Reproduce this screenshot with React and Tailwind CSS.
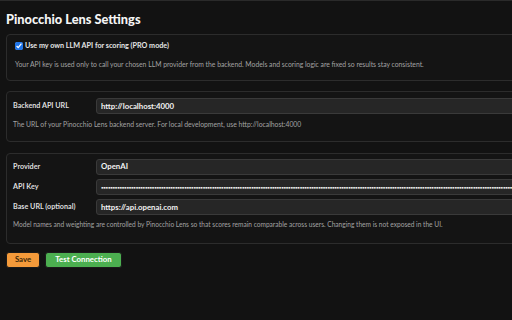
import React from 'react';

const font = { fontFamily: 'Lato, "Noto Sans", sans-serif' };

function Field({ label, children }) {
  return (
    <div className="grid grid-cols-[83px_1fr] items-center">
      <label className="text-[7.2px] font-bold text-[#dedede]">{label}</label>
      {children}
    </div>
  );
}

const boxCls =
  'h-[16px] w-full rounded-[3px] border border-[#3a3a3a] bg-[#262626] px-[4px] font-bold text-[#f2f2f2] outline-none';
const inputCls = boxCls + ' text-[7.8px]';
const passCls = boxCls + ' text-[4.5px] tracking-[-0.3px]';

export default function App() {
  return (
    <div
      className="h-[320px] w-[512px] overflow-hidden border-t border-[#2a2a2a] bg-[#121212] px-[6px] pt-[9px]"
      style={font}
    >
      <div className="w-[620px]">
        <h1 className="text-[12.8px] font-black leading-[18px] text-[#f5f5f5]">Pinocchio Lens Settings</h1>

        <section className="mt-[6px] h-[47px] rounded-[4px] border border-[#2c2c2c] bg-[#141414] px-[8px] pt-[6px]">
          <label className="flex items-center gap-[2px] text-[7.2px] font-bold text-[#e6e6e6]">
            <input type="checkbox" defaultChecked className="m-0 h-[8px] w-[8px] accent-[#1e74e8]" />
            Use my own LLM API for scoring (PRO mode)
          </label>
          <p className="mt-[7px] text-[6.8px] text-[#a3a3a3]">
            Your API key is used only to call your chosen LLM provider from the backend. Models and scoring logic are fixed so results stay consistent.
          </p>
        </section>

        <section className="mt-[10px] h-[51px] rounded-[4px] border border-[#2c2c2c] bg-[#141414] px-[6px] pt-[6px]">
          <Field label="Backend API URL">
            <input className={inputCls} defaultValue="http://localhost:4000" />
          </Field>
          <p className="mt-[5px] text-[6.8px] text-[#a3a3a3]">
            The URL of your Pinocchio Lens backend server. For local development, use http://localhost:4000
          </p>
        </section>

        <section className="mt-[11px] h-[91px] rounded-[4px] border border-[#2c2c2c] bg-[#141414] px-[6px] pt-[5px]">
          <div className="flex flex-col gap-[4px]">
            <Field label="Provider">
              <div className={inputCls + ' flex items-center'}>OpenAI</div>
            </Field>
            <Field label="API Key">
              <input type="password" className={passCls} defaultValue={'x'.repeat(300)} />
            </Field>
            <Field label="Base URL (optional)">
              <input className={inputCls} defaultValue="https://api.openai.com" />
            </Field>
          </div>
          <p className="mt-[5px] text-[6.6px] text-[#a3a3a3]">
            Model names and weighting are controlled by Pinocchio Lens so that scores remain comparable across users. Changing them is not exposed in the UI.
          </p>
        </section>

        <div className="mt-[8px] flex gap-[5px]">
          <button className="h-[16px] w-[34px] rounded-[3px] border border-[#1a1a1a] bg-[#f49a3a] text-[7.8px] font-bold text-[#3b2708]">
            Save
          </button>
          <button className="h-[16px] w-[77px] rounded-[3px] border border-[#1a1a1a] bg-[#4caf50] text-[7.8px] font-bold text-white">
            Test Connection
          </button>
        </div>
      </div>
    </div>
  );
}
